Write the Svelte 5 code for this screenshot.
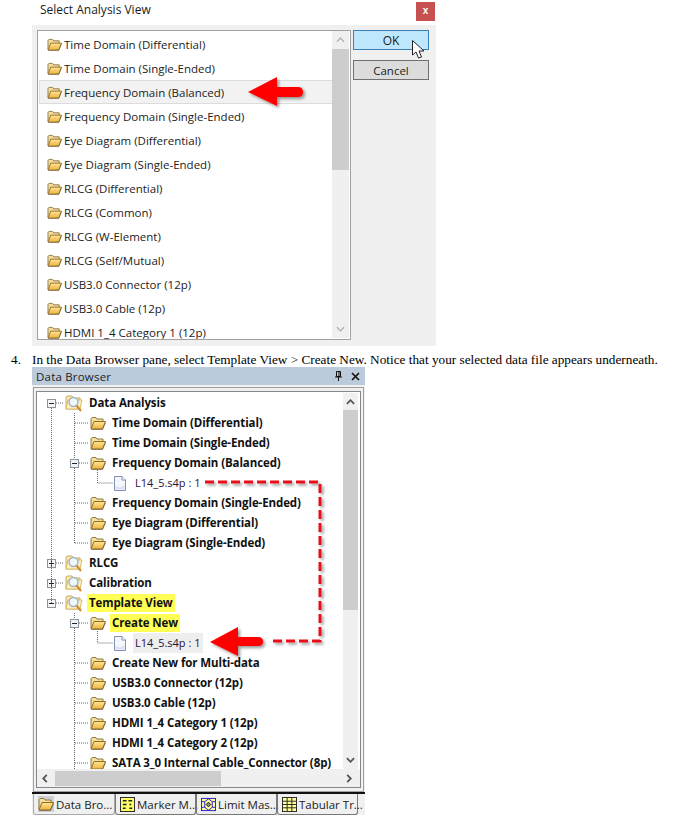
<script>
  const viewRows = ['Time Domain (Differential)','Time Domain (Single-Ended)','Frequency Domain (Balanced)','Frequency Domain (Single-Ended)','Eye Diagram (Differential)','Eye Diagram (Single-Ended)','RLCG (Differential)','RLCG (Common)','RLCG (W-Element)','RLCG (Self/Mutual)','USB3.0 Connector (12p)','USB3.0 Cable (12p)','HDMI 1_4 Category 1 (12p)'];
  const tree = [
    {l:0,t:'Data Analysis',e:'-'},
    {l:1,t:'Time Domain (Differential)'},
    {l:1,t:'Time Domain (Single-Ended)'},
    {l:1,t:'Frequency Domain (Balanced)',e:'-'},
    {l:2,t:'L14_5.s4p : 1'},
    {l:1,t:'Frequency Domain (Single-Ended)'},
    {l:1,t:'Eye Diagram (Differential)'},
    {l:1,t:'Eye Diagram (Single-Ended)'},
    {l:0,t:'RLCG',e:'+'},
    {l:0,t:'Calibration',e:'+'},
    {l:0,t:'Template View',e:'-',hl:true},
    {l:1,t:'Create New',e:'-',hl:true},
    {l:2,t:'L14_5.s4p : 1',sel:true},
    {l:1,t:'Create New for Multi-data'},
    {l:1,t:'USB3.0 Connector (12p)'},
    {l:1,t:'USB3.0 Cable (12p)'},
    {l:1,t:'HDMI 1_4 Category 1 (12p)'},
    {l:1,t:'HDMI 1_4 Category 2 (12p)'},
    {l:1,t:'SATA 3_0 Internal Cable_Connector (8p)'}
  ];
  const dotted = [
    'M51.5 408V603','M56 403H64','M56 563H64','M56 583H64','M56 603H64',
    'M74.5 413V458','M74.5 468V543','M75 423H89','M75 443H89','M79 463H89','M75 503H89','M75 523H89','M75 543H89',
    'M97.5 470V483H113',
    'M74.5 613V618','M74.5 628V770','M79 623H89','M75 663H89','M75 683H89','M75 703H89','M75 723H89','M75 743H89','M75 763H89',
    'M97.5 631V643H113'
  ];
  const tabs = ['Data Bro...','Marker M...','Limit Mas...','Tabular Tr...'];
</script>

{#snippet folder()}
  <svg class="folder" viewBox="0 0 16 14">
    <path d="M1 12.5V2.5L2 1.5H6L7 3H13V5.5" fill="#f3dc9c" stroke="#8f7a45"/>
    <path d="M1 13L4 5.5H15.5L12.5 13Z" fill="url(#fold)" stroke="#8f6e2a"/>
    <path d="M1.5 13.5H12.5L15.5 6.5" fill="none" stroke="#5e5333" stroke-opacity=".55"/>
  </svg>
{/snippet}

{#snippet searchFolder()}
  <svg class="search" viewBox="0 0 18 18">
    <path d="M1 15V3L2 2H7L8 4H15V15Z" fill="#fbe8a8" stroke="#c9ad5c"/>
    <path d="M1 15L3 6H17L15 15Z" fill="#fdf0bb" stroke="#d8bd6a"/>
    <circle cx="8.5" cy="8" r="4.5" fill="#eef7fb" stroke="#9db6c8" stroke-width="1.4"/>
    <path d="M11.5 11.5L16 17" stroke="#d28a3c" stroke-width="2.2"/>
  </svg>
{/snippet}

{#snippet fileIcon()}
  <svg class="file" viewBox="0 0 12 15">
    <path d="M.5.5H8L11.5 4V14.5H.5Z" fill="#f4f6fc" stroke="#7e90b8"/>
    <path d="M8 .5V4H11.5" fill="#fff" stroke="#7e90b8"/>
    <path d="M1.5 13.5H10.5V9L6 11.5L1.5 10Z" fill="#dbe3f3"/>
  </svg>
{/snippet}

{#snippet tabIcon(i)}
  {#if i === 0}
    <span class="tab-first">{@render folder()}</span>
  {:else if i === 1}
    <svg class="ticon" viewBox="0 0 16 16"><rect x=".5" y=".5" width="15" height="15" fill="#ffff66" stroke="#222"/><path d="M3 4H7M9 4H13M3 8H7M10 8H12M3 12H6M10 12H13" stroke="#223" stroke-width="1.4"/></svg>
  {:else if i === 2}
    <svg class="ticon" viewBox="0 0 16 16"><rect x=".5" y="1.5" width="15" height="13" fill="#ffffa0" stroke="#1a1ad0"/><path d="M1 5H4L8 2L12 5H15M1 11H4L8 14L12 11H15M4 5V11M12 5V11" fill="none" stroke="#1a1ad0"/><path d="M8 5.5L10.5 8L8 10.5L5.5 8Z" fill="#8a8a8a" stroke="#111"/></svg>
  {:else}
    <svg class="ticon" viewBox="0 0 16 16"><rect x=".5" y=".5" width="15" height="15" fill="#ffff99" stroke="#222"/><path d="M.5 4.5H15.5M.5 8H15.5M.5 11.5H15.5M5.5 .5V15.5M10.5 .5V15.5" stroke="#222"/></svg>
  {/if}
{/snippet}

<div class="page">
  <header class="dialog-title">
    <span>Select Analysis View</span>
    <button class="close">x</button>
  </header>

  <section class="dialog">
    <div class="listbox">
      <div class="list">
        {#each viewRows as row, i}
          <div class="list-row" class:active={i === 2}>{@render folder()}<span>{row}</span></div>
        {/each}
      </div>
      <div class="vbar light">
        <svg class="chev" viewBox="0 0 10 6"><path d="M1 5L5 1L9 5" fill="none" stroke="#a8a8a8" stroke-width="1.3"/></svg>
        <div class="thumb one"></div>
        <svg class="chev end" viewBox="0 0 10 6"><path d="M1 1L5 5L9 1" fill="none" stroke="#a8a8a8" stroke-width="1.3"/></svg>
      </div>
    </div>
    <div class="buttons">
      <button class="btn ok">OK</button>
      <button class="btn">Cancel</button>
    </div>
  </section>

  <p class="step"><span class="num">4.</span><span>In the Data Browser pane, select Template View &gt; Create New. Notice that your selected data file appears underneath.</span></p>

  <section class="panel">
    <header class="panel-title">
      <span>Data Browser</span>
      <span class="panel-tools">
        <svg width="7" height="10" viewBox="0 0 7 10"><path d="M1.5 .5H5.5V5.5H1.5ZM0 6H7M3.5 6V10M4 1V5" fill="none" stroke="#111"/></svg>
        <svg width="9" height="9" viewBox="0 0 9 9"><path d="M1 1L8 8M8 1L1 8" stroke="#111" stroke-width="1.6"/></svg>
      </span>
    </header>
    <div class="panel-frame">
      <div class="tree-box">
        <div class="tree-main">
          <div class="tree">
            {#each tree as n}
              <div class="node l{n.l}">
                {#if n.l < 2}
                  <span class="exp" class:hidden={!n.e}>
                    {#if n.e}<i class="h"></i>{/if}
                    {#if n.e === '+'}<i class="v"></i>{/if}
                  </span>
                {/if}
                {#if n.l === 0}{@render searchFolder()}{:else if n.l === 1}{@render folder()}{:else}{@render fileIcon()}{/if}
                <span class="label" class:hl={n.hl} class:sel={n.sel}>{n.t}</span>
              </div>
            {/each}
          </div>
          <div class="vbar dark">
            <svg class="chev" viewBox="0 0 10 6"><path d="M1 5L5 1L9 5" fill="none" stroke="#555" stroke-width="2"/></svg>
            <div class="thumb two"></div>
            <svg class="chev end" viewBox="0 0 10 6"><path d="M1 1L5 5L9 1" fill="none" stroke="#555" stroke-width="2"/></svg>
          </div>
        </div>
        <div class="hbar">
          <svg class="hchev" viewBox="0 0 6 10"><path d="M5 1L1 5L5 9" fill="none" stroke="#555" stroke-width="2"/></svg>
          <div class="hthumb"></div>
          <svg class="hchev end" viewBox="0 0 6 10"><path d="M1 1L5 5L1 9" fill="none" stroke="#555" stroke-width="2"/></svg>
        </div>
      </div>
    </div>
    <nav class="tabs">
      {#each tabs as tab, i}
        <div class="tab" class:current={i === 0}>{@render tabIcon(i)}<span>{tab}</span></div>
      {/each}
    </nav>
  </section>

  <svg class="overlay" width="694" height="820" viewBox="0 0 694 820">
    <defs>
      <linearGradient id="fold" x1="0" y1="0" x2="0" y2="1">
        <stop offset="0" stop-color="#ffe793"/><stop offset="1" stop-color="#eeb23e"/>
      </linearGradient>
      <filter id="sh" x="-20%" y="-20%" width="150%" height="160%">
        <feDropShadow dx="2" dy="2" stdDeviation="1.5" flood-color="#000" flood-opacity=".4"/>
      </filter>
    </defs>
    {#each dotted as d}
      <path {d} fill="none" stroke="#666" stroke-dasharray="1 1"/>
    {/each}
    <path d="M205 482H320V641H271" fill="none" stroke="#e8101c" stroke-width="3" stroke-dasharray="9 4" filter="url(#sh)"/>
    <path d="M248 92L277 77V87H298Q303 87 303 92Q303 97 298 97H277V106Z" fill="#fe0000" filter="url(#sh)"/>
    <path d="M210 642L238 627V637H258Q263 637 263 641.5Q263 646 258 646H238V656Z" fill="#fe0000" filter="url(#sh)"/>
    <path d="M412.5 40.5V55L416 52L418.5 58L421.5 57L419 51H424Z" fill="#fff" stroke="#222"/>
  </svg>
</div>

<style>
  :global(body) { margin: 0; background: #fff; }
  .page {
    position: relative; width: 694px; height: 820px; overflow: hidden;
    font-family: "Open Sans", "Noto Sans", sans-serif; font-size: 11.5px; color: #1c1c1c;
  }
  .overlay { position: absolute; left: 0; top: 0; pointer-events: none; }

  .dialog-title { display: flex; justify-content: space-between; align-items: flex-start; height: 25px; margin-left: 40px; width: 395px; box-sizing: border-box; padding-top: 2px; }
  .dialog-title span { line-height: 15px; font-size: 12px; }
  .close { width: 19px; height: 19px; border: 0; padding: 0 0 3px; background: #c75050; color: #fff; font: 700 10px "Liberation Sans", sans-serif; }

  .dialog { display: flex; width: 404px; height: 321px; margin-left: 32px; background: #f0f0f0; box-sizing: border-box; padding: 5px 7px 6px 5px; gap: 2px; }
  .listbox { display: flex; width: 314px; box-sizing: border-box; border: 1px solid #a0a0a0; background: #fff; overflow: hidden; padding-right: 1px; }
  .list { flex: 1; padding: 1px 0 0 1px; overflow: hidden; }
  .list-row { display: flex; align-items: center; height: 24px; box-sizing: border-box; padding-left: 8px; gap: 2px; white-space: nowrap; }
  .list-row.active { background: #f2f2f2; border: 1px solid #dcdcdc; border-right: 0; padding-left: 7px; }
  .list-row .folder { width: 15px; height: 13px; }

  .vbar { display: flex; flex-direction: column; align-items: stretch; background: #f0f0f0; }
  .vbar.light { width: 17px; margin-bottom: 1px; }
  .vbar.dark { width: 15px; }
  .chev { width: 9px; height: 6px; margin: 6px auto 6px; flex: none; }
  .vbar.dark .chev { margin-bottom: 5px; }
  .vbar .chev.end { margin: auto auto 6px; }
  .thumb { background: #cdcdcd; flex: none; }
  .thumb.one { height: 121px; }
  .thumb.two { height: 200px; }

  .buttons { display: flex; flex-direction: column; gap: 10px; width: 76px; }
  .btn { height: 20px; box-sizing: border-box; border: 1px solid #707070; background: #dcdcdc; padding: 0; font: 11.5px "Open Sans", sans-serif; color: #1c1c1c; }
  .btn.ok { background: #bee6fd; border-color: #3c7fb1; font-size: 12px; }

  .step { display: flex; margin: 7px 0 0; height: 14px; font: 13.25px/14px "Liberation Serif", serif; color: #000; white-space: nowrap; }
  .num { width: 21px; margin-left: 11px; flex: none; }

  .panel { width: 333px; height: 448px; margin: 0 0 0 32px; background: #f0f0f0; display: flex; flex-direction: column; }
  .panel-title { height: 18px; flex: none; background: #bccbdb; display: flex; justify-content: space-between; align-items: center; padding: 0 5px 0 4px; font-size: 11.5px; color: #222; letter-spacing: .2px; }
  .panel-tools { display: flex; align-items: center; gap: 9px; }
  .panel-frame { flex: 1; margin: 2px 1px 0; border: 1px solid #a0a0a0; padding: 3px 2px 3px; display: flex; min-height: 0; }
  .tree-box { flex: 1; border: 1px solid #828790; background: #fff; display: flex; flex-direction: column; min-height: 0; }
  .tree-main { flex: 1; min-height: 0; display: flex; padding-right: 2px; padding-top: 1px; }
  .tree { flex: 1; overflow: hidden; font-weight: 700; font-size: 11.5px; letter-spacing: -.1px; color: #111; min-width: 0; }
  .node { display: flex; align-items: center; height: 20px; white-space: nowrap; }
  .node.l0 { padding-left: 10px; }
  .node.l1 { padding-left: 33px; }
  .node.l2 { padding-left: 77px; }
  .exp { position: relative; width: 9px; height: 9px; box-sizing: border-box; border: 1px solid #8a94a0; background: #f4f4f4; flex: none; }
  .exp.hidden { visibility: hidden; }
  .exp .h { position: absolute; left: 1px; right: 1px; top: 3px; height: 1px; background: #223; }
  .exp .v { position: absolute; top: 1px; bottom: 1px; left: 3px; width: 1px; background: #223; }
  .l0 .exp { margin-right: 9px; }
  .l1 .exp { margin-right: 11px; }
  .search { width: 18px; height: 18px; flex: none; }
  .folder { width: 16px; height: 14px; flex: none; }
  .file { width: 12px; height: 15px; flex: none; }
  .label { padding: 1px 2px; margin-left: 4px; line-height: 16px; }
  .l2 .label { font-weight: 400; font-size: 11px; letter-spacing: 0; color: #2c1038; margin-left: 7px; padding: 2px 3px 2px 2px; }
  .label.hl { background: #ffff55; }
  .label.sel { background: #eeeeee; }

  .hbar { flex: none; height: 18px; background: #f0f0f0; display: flex; align-items: center; padding: 0 5px 0 0; }
  .hchev { width: 6px; height: 9px; flex: none; margin: 0 7px 0 5px; }
  .hchev.end { margin: 0 3px 0 auto; }
  .hthumb { width: 166px; height: 15px; background: #cdcdcd; flex: none; }

  .tabs { flex: none; height: 23px; border-top: 2px solid #111; display: flex; box-sizing: border-box; padding-left: 1px; }
  .tab { width: 81px; display: flex; align-items: center; gap: 2px; padding-left: 4px; box-sizing: border-box; border: 1px solid #777; border-top: 0; border-radius: 0 0 3px 3px; font-size: 11.5px; white-space: nowrap; color: #222; }
  .tab.current { width: 82px; border-color: #aaa; }
  .tab-first { display: flex; background: #cfcfcf; padding: 1px 0; }
  .ticon { width: 15px; height: 15px; flex: none; }
</style>
